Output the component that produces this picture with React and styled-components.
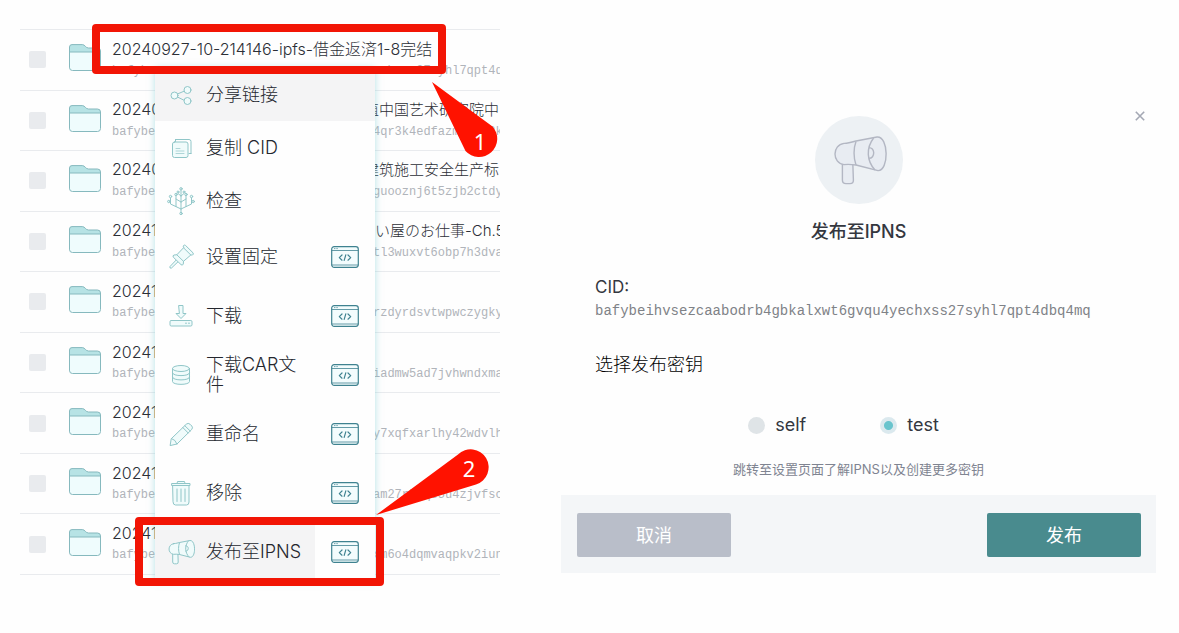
import React from "react";
import styled, { createGlobalStyle } from "styled-components";

const sans = `Inter, "Noto Sans CJK SC", sans-serif`;
const mono = `"Liberation Mono", monospace`;
const red = "#f21505";

const GlobalStyle = createGlobalStyle`
  * { box-sizing: border-box; }
  body { margin: 0; background: #fefefe; color: #34373f; font-family: ${sans}; }
  button { font: inherit; color: inherit; border: 0; background: none; padding: 0; cursor: pointer; }
  ul { list-style: none; margin: 0; padding: 0; }
  svg { display: block; flex: none; }
`;

const Page = styled.main`
  display: grid;
  grid-template-columns: minmax(0, 480fr) minmax(0, 595fr);
  column-gap: 61px;
  align-items: start;
  padding: 29px 23px 16px 20px;
`;

const Browser = styled.section`
  position: relative;
`;

/* File list */
const FileList = styled.ul`
  display: grid;
  grid-auto-rows: 1fr;
  min-height: 546px;
  border-top: 1px solid #e9ebee;
`;

const FileRow = styled.li`
  display: flex;
  align-items: center;
  padding-left: 9px;
  border-bottom: 1px solid #e9ebee;
  overflow: hidden;
`;

const Check = styled.input`
  appearance: none;
  flex: none;
  width: 17px;
  height: 17px;
  margin: 0 23px 0 0;
  border-radius: 2px;
  background: #e9ebee;
`;

const FolderSlot = styled.span`
  padding-bottom: 4px;
  margin-right: 11px;
`;

const FileText = styled.div`
  flex: 1;
  min-width: 0;
`;

const NameLine = styled.div`
  display: grid;
  grid-template-columns: ${(p) => (p.$whole ? "1fr" : "252px 1fr")};
  align-items: baseline;
  font-size: 16px;
  font-weight: 300;
  line-height: 22px;
  white-space: nowrap;
  color: #2c2f36;
`;

const NameTail = styled.span`
  font-size: 15px;
`;

const CidLine = styled.div`
  display: grid;
  grid-template-columns: 261px 1fr;
  font-family: ${mono};
  font-size: 12px;
  line-height: 22px;
  white-space: nowrap;
  color: #b0b4ba;
`;

/* Context menu */
const Menu = styled.div`
  position: absolute;
  top: 39px;
  left: 135px;
  width: 220px;
  background: #fefefe;
  box-shadow: 0 0 7px rgba(105, 196, 205, 0.5);
`;

const MenuGroup = styled.ul``;

const MenuItem = styled.li`
  display: flex;
  min-height: ${(p) => (p.$cli ? "59px" : "53px")};
`;

const MenuButton = styled.button`
  flex: 1;
  display: flex;
  align-items: center;
  gap: 11px;
  padding: 0 10px 0 12px;
  text-align: left;
  font-size: 18px;
  font-weight: 300;
  line-height: 20px;
  color: #24272e;
  background: ${(p) => (p.$active ? "#f4f4f5" : "transparent")};
`;

const CliButton = styled.button`
  flex: none;
  display: grid;
  place-items: center;
  width: 60px;
`;

/* Annotations drawn over the list */
const Frame = styled.div`
  position: absolute;
  top: ${(p) => p.$top}px;
  left: ${(p) => p.$left}px;
  width: ${(p) => p.$width}px;
  height: ${(p) => p.$height}px;
  border: 8px solid ${red};
  border-radius: 4px;
  pointer-events: none;
`;

const Callout = styled.svg`
  position: absolute;
  top: ${(p) => p.$top}px;
  left: ${(p) => p.$left}px;
  pointer-events: none;
  font-family: "Noto Sans", sans-serif;
  font-size: 22px;
`;

/* Dialog */
const Dialog = styled.section`
  margin-top: 71px;
  display: flex;
  flex-direction: column;
`;

const CloseButton = styled.button`
  align-self: flex-end;
  display: grid;
  place-items: center;
  width: 32px;
  height: 32px;
  margin-bottom: -16px;
`;

const Badge = styled.div`
  align-self: center;
  display: grid;
  place-items: center;
  width: 88px;
  height: 88px;
  border-radius: 50%;
  background: #edf1f4;
`;

const Title = styled.h2`
  margin: 16px 0 31px;
  font-size: 18px;
  font-weight: 500;
  line-height: 24px;
  text-align: center;
`;

const Body = styled.div`
  padding: 0 34px;
  font-size: 18px;
  line-height: 24px;
`;

const Label = styled.div`
  font-size: 17px;
`;

const Cid = styled.div`
  font-family: ${mono};
  font-size: 14px;
  line-height: 24px;
  color: #7f8287;
  overflow-wrap: anywhere;
`;

const Keys = styled.fieldset`
  margin: 0;
  padding: 30px 0 0;
  border: 0;
  min-width: 0;
`;

const Legend = styled.legend`
  float: left;
  width: 100%;
  padding: 0;
  margin-bottom: 36px;
  font-weight: 300;
  color: #000;
`;

const Options = styled.div`
  clear: both;
  display: flex;
  justify-content: center;
  gap: 74px;
  padding-right: 30px;
`;

const Option = styled.label`
  display: flex;
  align-items: center;
  gap: 10px;
`;

const Radio = styled.input`
  appearance: none;
  width: 17px;
  height: 17px;
  margin: 0;
  border-radius: 50%;
  background: #dfe4e7;
  &:checked {
    background: radial-gradient(circle, #69c4cd 0 4px, #dbe9ee 5px);
  }
`;

const Hint = styled.p`
  margin: 22px 0 16px;
  font-size: 13px;
  line-height: 20px;
  text-align: center;
  color: #7f8491;
`;

const Footer = styled.footer`
  display: flex;
  justify-content: space-between;
  padding: 18px 15px 16px 16px;
  background: #f4f6f8;
`;

const Action = styled.button`
  width: 154px;
  height: 44px;
  padding-bottom: 3px;
  border-radius: 2px;
  font-size: 18px;
  color: #fff;
  background: ${(p) => (p.$primary ? "#498b8e" : "#b9bec9")};
`;

const Folder = () => (
  <svg width="32" height="27" viewBox="0 0 32 27" strokeWidth="1" stroke="#86b9be">
    <path fill="#b7e3e5" d="M.5 24V3Q.5.6 3 .6H13.5C16 .6 16.5 4 19.500 4H28.500Q31.500 4 31.500 7V12H.5Z" />
    <path fill="#effcfd" d="M.5 8H31.500V23.500Q31.500 26.500 28.500 26.500H3.500Q.5 26.500 .5 23.500Z" />
  </svg>
);

const Horn = () => (
  <>
    <path d="M5.700 15.500V24Q5.700 25.800 7.500 25.800H9.500Q11.300 25.800 11.200 24L10.900 15.500" />
    <path d="M6.500 5.700Q8 5.800 12.500 4.500L23 2.500C29 2 29 19.500 23.500 19.300L12.500 16.500Q9 16 6.500 16.300C.5 15.500.5 6.500 6.500 5.700Z" />
    <path d="M12.500 4.700C11.200 8 11.200 13 12.500 16.500M21.300 3C17.500 8 17.800 14.500 22 19M18.700 7.800C22.200 7.500 22.200 13.300 18.900 13.200" />
  </>
);

const glyphs = {
  share: (
    <>
      <path d="M10.500 13 17.500 10M10.500 16 17.500 19.500" />
      <circle cx="7.500" cy="14.500" r="3.500" />
      <circle cx="20.500" cy="9" r="3.500" />
      <circle cx="20.500" cy="20" r="3.500" />
    </>
  ),
  copy: (
    <>
      <path fill="none" d="M8.500 5.500H22Q24 5.500 24 7.500V19.500M8.500 5.500V7.500M24 19.500H22" />
      <rect x="5.500" y="8" width="15.500" height="15.500" rx="2" />
      <path d="M9 14.500H13M9 17H17M9 19.500H17" strokeWidth=".7" />
    </>
  ),
  inspect: (
    <>
      <path fill="none" d="M14 26V2.500M14 22 3.500 17V10.500M14 22 24.500 17V10.500M9 19.500V9M19 19.500V9M14 15 9 12M14 15 19 12M14 9 11 6.500M14 9 17 6.500" />
      <g>
        <circle cx="14" cy="1.800" r="1.200" />
        <circle cx="9" cy="7.500" r="1.200" />
        <circle cx="19" cy="7.500" r="1.200" />
        <circle cx="3.500" cy="9.500" r="1.200" />
        <circle cx="24.500" cy="9.500" r="1.200" />
        <circle cx="1.800" cy="14.500" r="1.200" />
        <circle cx="26.200" cy="14.500" r="1.200" />
        <circle cx="11" cy="5" r="1" />
        <circle cx="17" cy="5" r="1" />
        <circle cx="14" cy="26.500" r="1.200" />
      </g>
    </>
  ),
  pin: (
    <>
      <path d="M9.200 17 3 23.500Q2.300 25.800 4.500 25L11 18.800" />
      <path d="M16.300 2.800Q17.300 1.300 18.600 2.500L26 9.800Q27 11.300 25.500 12L23.800 12 16.500 18.300 16.300 21Q15.500 23 14 21.600L6.300 14.200Q5.300 12.600 7 12L9.800 11.800 16.500 4.800Z" />
      <path d="M16.500 4.800 23.800 12M9.800 11.800 16.500 18.300" />
    </>
  ),
  download: (
    <>
      <path d="M12 3.500H16V11.500H19L14 16.500 9 11.500H12Z" />
      <rect x="3" y="18.500" width="22" height="5.500" rx="1.200" />
      <path d="M18.500 21.200H19.500M21.500 21.200H22.500" />
    </>
  ),
  database: (
    <>
      <path d="M5.500 7.500V20.500C5.500 24.300 22.500 24.300 22.500 20.500V7.500" />
      <ellipse cx="14" cy="7.500" rx="8.500" ry="3" />
      <path fill="none" d="M5.500 12C5.500 15.600 22.500 15.600 22.500 12M5.500 16.300C5.500 19.900 22.500 19.900 22.500 16.300" />
    </>
  ),
  pencil: (
    <>
      <path d="M4.500 18.500 19.300 4.200Q21.200 2.500 23 4.200L24.800 6Q26.300 7.800 24.600 9.600L10 24 3.500 25.500Z" />
      <path d="M15.800 7.500 21.200 13M17.800 5.700 23.200 11M4.500 18.500Q8.500 19.500 10 24" />
    </>
  ),
  trash: (
    <>
      <path d="M6 6.500H22V23Q22 26 19.500 26H8.500Q6 26 6 23Z" />
      <path d="M5 4.500H23V6.500H5ZM10 4.500 10.500 2.500H17.500L18 4.500" />
      <path d="M10 10V22.500M14 10V22.500M18 10V22.500" />
    </>
  ),
  horn: <Horn />,
};

const MenuIcon = ({ name }) => (
  <svg width="28" height="28" viewBox="0 0 28 28" fill="#f0fbfb" stroke="#90c6c8" strokeWidth="1" strokeLinejoin="round" strokeLinecap="round">
    {glyphs[name]}
  </svg>
);

const CliIcon = () => (
  <svg width="28" height="22" viewBox="0 0 28 22" fill="none" stroke="#3f8290" strokeLinecap="round" strokeLinejoin="round">
    <rect x=".7" y=".7" width="26.600" height="20.600" rx="2.500" fill="#f3fcfd" strokeWidth="1.200" />
    <path strokeWidth=".8" d="M1 4.500H27M1 19H27M3.500 2.600H4M5.800 2.600H6.300" />
    <path strokeWidth="1.200" d="M11 9 8.300 11.600 11 14.200M17 9 19.700 11.600 17 14.200M14.800 8.800 13.200 14.400" />
  </svg>
);

const files = [
  { name: "20240927-10-214146-ipfs-借金返済1-8完结", tail: "echxss27syhl7qpt4d" },
  { name: "20240", more: "植中国艺术研究院中", tail: "4qr3k4edfazm5t2n3k" },
  { name: "20240", more: "建筑施工安全生产标", tail: "guooznj6t5zjb2ctdy" },
  { name: "20241", more: "- い屋のお仕事-Ch.5", tail: "tl3wuxvt6obp7h3dva" },
  { name: "20241", tail: "rzdyrdsvtwpwczygky" },
  { name: "20241", tail: "iadmw5ad7jvhwndxma" },
  { name: "20241", tail: "y7xqfxarlhy42wdvlh" },
  { name: "20241", tail: "am27rkgqe5u4zjvfsc" },
  { name: "20241", tail: "xm6o4dqmvaqpkv2iun" },
];

const basicItems = [
  { icon: "share", text: "分享链接", active: true },
  { icon: "copy", text: "复制 CID" },
  { icon: "inspect", text: "检查" },
];

const cliItems = [
  { icon: "pin", text: "设置固定" },
  { icon: "download", text: "下载" },
  { icon: "database", text: "下载CAR文件" },
  { icon: "pencil", text: "重命名" },
  { icon: "trash", text: "移除" },
  { icon: "horn", text: "发布至IPNS", active: true },
];

export default function App() {
  return (
    <>
      <GlobalStyle />
      <Page>
        <Browser>
          <FileList>
            {files.map((f, i) => (
              <FileRow key={i}>
                <Check type="checkbox" aria-label={f.name} />
                <FolderSlot><Folder /></FolderSlot>
                <FileText>
                  <NameLine $whole={!f.more}>
                    <span>{f.name}</span>
                    {f.more && <NameTail>{f.more}</NameTail>}
                  </NameLine>
                  <CidLine>
                    <span>bafybe</span>
                    <span>{f.tail}</span>
                  </CidLine>
                </FileText>
              </FileRow>
            ))}
          </FileList>

          <Menu>
            <MenuGroup>
              {basicItems.map((m) => (
                <MenuItem key={m.icon}>
                  <MenuButton type="button" $active={m.active}>
                    <MenuIcon name={m.icon} />
                    <span>{m.text}</span>
                  </MenuButton>
                </MenuItem>
              ))}
            </MenuGroup>
            <MenuGroup>
              {cliItems.map((m) => (
                <MenuItem key={m.icon} $cli>
                  <MenuButton type="button" $active={m.active}>
                    <MenuIcon name={m.icon} />
                    <span>{m.text}</span>
                  </MenuButton>
                  <CliButton type="button" aria-label="CLI"><CliIcon /></CliButton>
                </MenuItem>
              ))}
            </MenuGroup>
          </Menu>

          <Frame $top={-5} $left={72} $width={354} $height={50} />
          <Frame $top={488} $left={115} $width={249} $height={69} />
          <Callout $top={51} $left={409} width="72" height="80" viewBox="0 0 72 80">
            <path fill="#ff1200" d="M3 2 63.500 46.500A18 18 0 1 1 36.500 71Z" />
            <text x="51" y="70" textAnchor="middle" fill="#fff">1</text>
          </Callout>
          <Callout $top={419} $left={355} width="116" height="70" viewBox="0 0 116 70">
            <path fill="#ff1200" d="M1 67 83 6.500A18 18 0 1 1 101 36.500Z" />
            <text x="94" y="29" textAnchor="middle" fill="#fff">2</text>
          </Callout>
        </Browser>

        <Dialog role="dialog" aria-labelledby="dialog-title">
          <CloseButton type="button" aria-label="关闭">
            <svg width="10" height="10" viewBox="0 0 10 10" stroke="#a4a8b4" strokeWidth="1.600">
              <path d="M.8.8 9.200 9.200M9.200.8.8 9.200" />
            </svg>
          </CloseButton>
          <Badge>
            <svg width="56" height="56" viewBox="0 0 28 28" fill="#e8ecf2" stroke="#b3b7c3" strokeWidth=".7" strokeLinejoin="round">
              <Horn />
            </svg>
          </Badge>
          <Title id="dialog-title">发布至IPNS</Title>
          <Body>
            <Label>CID:</Label>
            <Cid>bafybeihvsezcaabodrb4gbkalxwt6gvqu4yechxss27syhl7qpt4dbq4mq</Cid>
            <Keys>
              <Legend>选择发布密钥</Legend>
              <Options>
                <Option><Radio type="radio" name="key" />self</Option>
                <Option><Radio type="radio" name="key" defaultChecked />test</Option>
              </Options>
            </Keys>
            <Hint>跳转至设置页面了解IPNS以及创建更多密钥</Hint>
          </Body>
          <Footer>
            <Action type="button">取消</Action>
            <Action type="button" $primary>发布</Action>
          </Footer>
        </Dialog>
      </Page>
    </>
  );
}
